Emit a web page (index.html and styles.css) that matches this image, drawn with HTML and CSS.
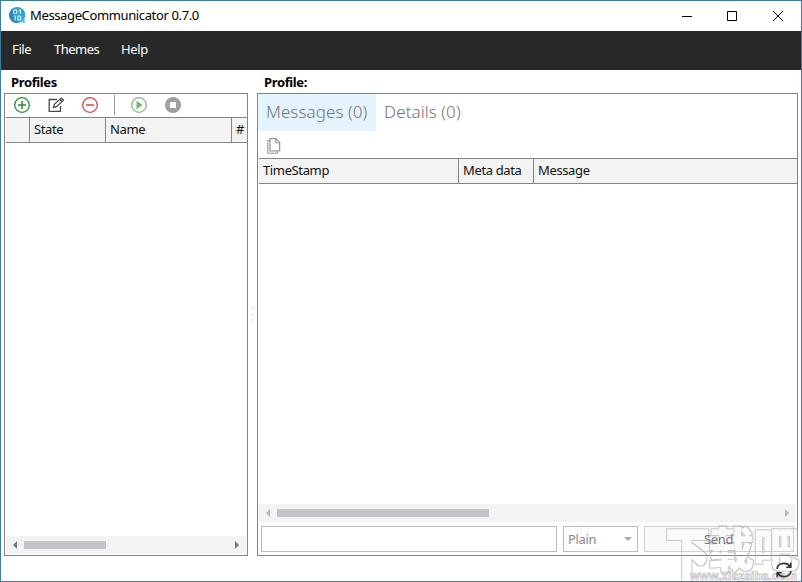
FILE: index.html
```
<!DOCTYPE html>
<html lang="en">
<head>
    <meta charset="UTF-8">
    <title>MessageCommunicator 0.7.0</title>
    <link rel="stylesheet" href="styles.css">
</head>
<body>
    <div class="window">
        <div class="title-bar">
            <svg class="logo" width="17" height="17" viewBox="0 0 17 17">
                <circle cx="8.300" cy="8" r="8" fill="#35a2d4"/>
                <path d="M11 14.500l5 1.800-.8-5z" fill="#4fc0e4"/>
                <path d="M1 12A8 8 0 0 1 6 .5l2 15.500A8 8 0 0 1 1 12z" fill="#2a8abd"/>
                <g fill="none" stroke="#d5f2fc" stroke-width="1.200"><rect x="4.600" y="2.800" width="3" height="3.700" rx="1"/><path d="M9.800 3h1.500v4M4.800 9h1.400v4.500"/><rect x="8.700" y="9" width="3" height="3.900" rx="1"/></g>
            </svg>
            <span class="title">MessageCommunicator 0.7.0</span>
            <svg class="win-btns" width="104" height="12" viewBox="0 0 104 12">
                <path d="M1 6.500h10M46.500 1.500h9v9h-9zM92 1l10 10M102 1L92 11" fill="none" stroke="#000"/>
            </svg>
        </div>
        <ul class="menu">
            <li class="m-file">File</li>
            <li class="m-themes">Themes</li>
            <li class="m-help">Help</li>
        </ul>
        <div class="main">
            <div class="left">
                <h2>Profiles</h2>
                <div class="panel">
                    <div class="tools">
                        <svg width="16" height="16" viewBox="0 0 16 16" fill="none" stroke="#2c8c2c"><circle cx="8" cy="8" r="7.300" stroke-width="1.300"/><path d="M8 4v8M4 8h8" stroke-width="1.500"/></svg>
                        <svg width="17" height="16" viewBox="0 0 17 16" fill="none" stroke="#4a4a4a" stroke-width="1.300"><path d="M9 2.500H1.200v11.800h11.300V9M5.500 10.500l.8-3.200 7-6.200 2.200 2.200-7 6.400zM11.800 2.500l2.300 2.300"/></svg>
                        <svg width="16" height="16" viewBox="0 0 16 16" fill="none" stroke="#d04848"><circle cx="8" cy="8" r="7.300" stroke-width="1.300"/><path d="M4 8h8" stroke-width="1.500"/></svg>
                        <i class="sep"></i>
                        <svg width="16" height="16" viewBox="0 0 16 16"><circle cx="8" cy="8" r="7.300" fill="none" stroke="#82bd82" stroke-width="1.300"/><path d="M5.500 3.800v8.400L11.600 8z" fill="#73b573"/></svg>
                        <svg width="16" height="16" viewBox="0 0 16 16"><circle cx="8" cy="8" r="8" fill="#a0a0a0"/><rect x="5" y="5" width="6" height="6" rx=".5" fill="#fff"/></svg>
                    </div>
                    <div class="thead profiles-head">
                        <span></span>
                        <span>State</span>
                        <span>Name</span>
                        <span>#</span>
                    </div>
                    <div class="rows"></div>
                    <div class="scroll">
                        <i class="arrow prev"></i>
                        <i class="thumb"></i>
                        <i class="arrow next"></i>
                    </div>
                </div>
            </div>
            <div class="splitter"><i></i><i></i><i></i></div>
            <div class="right">
                <h2>Profile:</h2>
                <div class="panel">
                    <div class="tabs">
                        <div class="tab on">Messages (0)</div>
                        <div class="tab">Details (0)</div>
                    </div>
                    <div class="copy">
                        <svg width="14" height="16" viewBox="0 0 14 16" fill="none" stroke="#999"><path d="M3 .7h6l3.600 3.700v8.400H3z" stroke-width="1.300"/><path d="M8.700 1v3.800h3.800M3 2.500H.8v12.700h9.700v-2" stroke-width="1.100"/></svg>
                    </div>
                    <div class="thead messages-head">
                        <span>TimeStamp</span>
                        <span>Meta data</span>
                        <span>Message</span>
                    </div>
                    <div class="rows"></div>
                    <div class="scroll off">
                        <i class="arrow prev"></i>
                        <i class="thumb"></i>
                        <i class="arrow next"></i>
                    </div>
                    <div class="send-row">
                        <div class="input"></div>
                        <div class="select"><span>Plain</span><i></i></div>
                        <div class="send"><span>Send</span></div>
                    </div>
                </div>
            </div>
        </div>
        <div class="status">
            <svg width="16" height="16" viewBox="0 0 16 16" fill="none" stroke="#333" stroke-width="1.600"><path d="M1 7a7 6.300 0 0 1 13-2.500M15 9A7 6.300 0 0 1 2 11.500M14.800.8v4.500h-4.500M1.200 15.200v-4.500h4.500"/></svg>
        </div>
        <svg class="watermark" width="136" height="58" viewBox="0 0 136 58">
            <!-- keep only the edge of the glyphs -->
            <filter id="hollow-wide" x="-10%" y="-10%" width="120%" height="120%">
                <feMorphology in="SourceAlpha" operator="dilate" radius="3" result="outer"/>
                <feMorphology in="SourceAlpha" operator="dilate" radius="2" result="inner"/>
                <feFlood flood-color="#b4b4b4" flood-opacity=".75"/>
                <feComposite in2="outer" operator="in"/>
                <feComposite in2="inner" operator="out"/>
            </filter>
            <filter id="hollow" x="-5%" y="-10%" width="110%" height="120%">
                <feMorphology in="SourceAlpha" operator="dilate" radius="1" result="outer"/>
                <feFlood flood-color="#b4b4b4" flood-opacity=".75"/>
                <feComposite in2="outer" operator="in"/>
                <feComposite in2="SourceAlpha" operator="out"/>
            </filter>
            <g filter="url(#hollow-wide)">
                <text class="mark" transform="translate(2 52) scale(.9 1.200)">下</text>
            </g>
            <g filter="url(#hollow)">
                <text class="mark heavy" x="43" y="43" textLength="91" lengthAdjust="spacingAndGlyphs">载吧</text>
            </g>
            <text class="site" x="25" y="57" textLength="107" lengthAdjust="spacingAndGlyphs">www.xiazaiba.com</text>
        </svg>
    </div>
</body>
</html>
```

FILE: styles.css
```
*{
    margin: 0;
    padding: 0;
    box-sizing: border-box;
    list-style-type: none;
}
body{
    height: 582px;
    overflow: hidden;
    background: #fff;
    color: #111;
    font: 13px/18px "Noto Sans", "Open Sans", sans-serif;
    letter-spacing: -.37px;
    white-space: nowrap;
}
.window{
    position: relative;
    display: flex;
    flex-direction: column;
    width: 802px;
    height: 582px;
    border: 1px solid #3d7c9c;
}
.title-bar{
    display: flex;
    flex: none;
    align-items: center;
    height: 30px;
    padding: 0 16px 0 8px;
}
.logo{
    margin-bottom: 1px;
}
.title{
    margin: 0 0 2px 4px;
    color: #000;
}
.win-btns{
    margin-left: auto;
}
.menu{
    display: flex;
    flex: none;
    gap: 22px;
    height: 39px;
    padding-left: 11px;
    background: #282828;
    color: #fff;
    line-height: 37px;
}
.m-file{
    width: 20px;
}
.m-themes{
    width: 45px;
    letter-spacing: -.5px;
}
.main{
    display: flex;
    flex: none;
    height: 486px;
    padding: 0 3px;
}
.left,
.right{
    display: flex;
    flex-direction: column;
}
.left{
    width: 244px;
}
.right{
    width: 541px;
}
h2{
    height: 23px;
    padding-left: 7px;
    color: #000;
    font-size: 13px;
    line-height: 24px;
}
.panel{
    display: flex;
    flex: 1;
    flex-direction: column;
    border: 1px solid #858585;
}
.tools{
    display: flex;
    align-items: center;
    gap: 18px;
    height: 23px;
    padding: 0 0 1px 9px;
}
.tools svg:nth-child(2){
    margin-right: -1px;
}
.sep{
    width: 1px;
    height: 20px;
    margin: 0 -2px;
    background: #999;
}
.thead{
    display: flex;
    height: 26px;
    margin-left: 1px;
    border: 1px solid #858585;
    border-width: 1px 0;
    background: #f3f3f3;
    line-height: 23px;
}
.thead span{
    padding-left: 4px;
    border-right: 1px solid #858585;
}
.thead span:last-child{
    flex: 1;
    border: 0;
}
.profiles-head span:nth-child(1){
    width: 24px;
}
.profiles-head span:nth-child(2){
    width: 76px;
}
.profiles-head span:nth-child(3){
    width: 126px;
}
.messages-head span:nth-child(1){
    width: 200px;
}
.messages-head span:nth-child(2){
    width: 75px;
}
.rows{
    flex: 1;
}
.scroll{
    display: flex;
    align-items: center;
    height: 18px;
    margin: 0 1px 1px;
    padding: 0 7px;
    background: #f3f3f3;
}
.thumb{
    width: 82px;
    height: 8px;
    margin-left: 7px;
    background: #c2c3c9;
}
.arrow{
    border: solid transparent;
    border-width: 4px 0;
}
.prev{
    border-right: 4px solid #777;
}
.next{
    margin-left: auto;
    border-left: 4px solid #777;
}
.off .thumb{
    width: 212px;
}
.off .prev{
    border-right-color: #b8b8b8;
}
.off .next{
    border-left-color: #b8b8b8;
}
.splitter{
    display: flex;
    flex-direction: column;
    align-items: center;
    gap: 3px;
    width: 9px;
    padding-top: 237px;
}
.splitter i{
    width: 3px;
    height: 3px;
    background: #f0f0f0;
}
.tabs{
    display: flex;
    height: 37px;
    color: #757575;
    font-size: 17px;
    font-weight: 300;
    letter-spacing: .08px;
    line-height: 36px;
}
.tab{
    width: 118px;
    padding-left: 8px;
}
.tab.on{
    background: #e5f4fc;
}
.copy{
    height: 27px;
    padding: 7px 0 0 9px;
}
.copy svg{
    display: block;
}
.send-row{
    display: flex;
    gap: 6px;
    height: 32px;
    padding: 3px 3px;
    color: #888;
    line-height: 24px;
}
.input,
.select,
.send{
    height: 26px;
    border: 1px solid #bcbcbc;
}
.input{
    width: 296px;
}
.select{
    display: flex;
    align-items: center;
    justify-content: space-between;
    width: 75px;
    padding: 0 5px 0 4px;
}
.select i{
    border: 4px solid transparent;
    border-top-color: #aaa;
    border-bottom: 0;
}
.send{
    flex: 1;
    padding-left: 59px;
    border-color: #d0d0d0;
    background: #fafafa;
    color: #777;
}
.send span,
.status svg{
    position: relative;
    z-index: 1;
}
.status{
    padding: 6px 9px 0;
    text-align: right;
    line-height: 0;
}
.watermark{
    position: absolute;
    right: 0;
    bottom: 0;
    overflow: hidden;
    letter-spacing: 0;
}
.mark{
    font: bold 46px "Noto Sans CJK SC", sans-serif;
}
.heavy{
    stroke: #000;
    stroke-width: 1.5px;
}
.site{
    fill: #fff;
    stroke: #bbb;
    stroke-width: .7px;
    font: bold 12px "Liberation Sans", sans-serif;
}
```
